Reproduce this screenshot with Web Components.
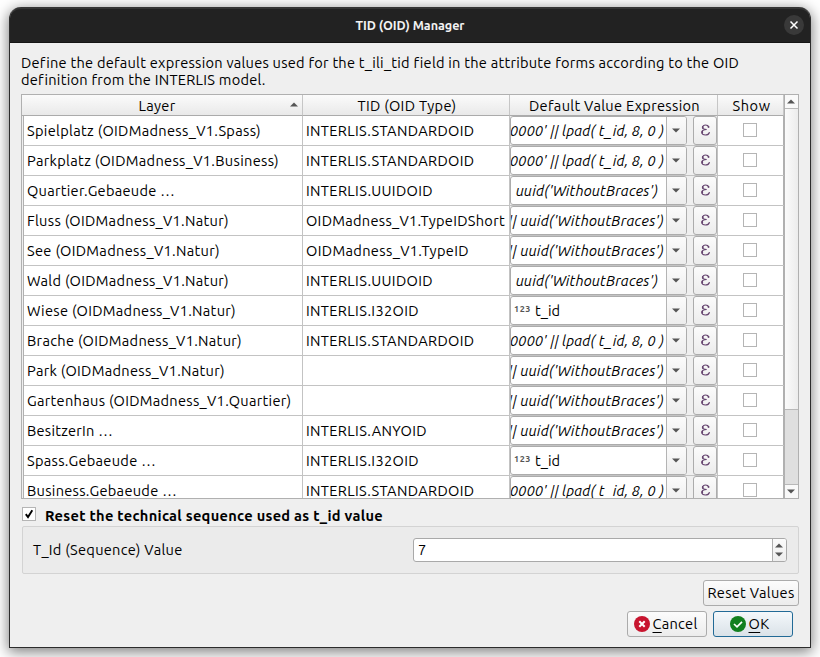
<!DOCTYPE html>
<html lang="en">
<head>
<meta charset="utf-8">
<title>TID (OID) Manager</title>
<style>
html,body{margin:0;height:100%;overflow:hidden;background:#fff}
body{font-family:"Ubuntu","Noto Sans",sans-serif;font-size:14.6px;color:#000}
</style>
</head>
<body>
<tid-dialog></tid-dialog>
<script>
class FitText extends HTMLElement{
  connectedCallback(){
    const root=this.attachShadow({mode:'open'});
    root.innerHTML='<style>:host{display:inline-block;white-space:pre;flex:none}</style><span><slot></slot></span>';
    const span=root.querySelector('span');
    const target=Number(this.getAttribute('w'));
    const width=span.getBoundingClientRect().width;
    if(target&&width) this.style.letterSpacing=((target-width)/this.textContent.length)+'px';
  }
}
const define=(name,html,setup)=>customElements.define(name,class extends HTMLElement{
  connectedCallback(){
    if(this.shadowRoot) return;
    this.attachShadow({mode:'open'});
    const t=document.createElement('template');
    t.innerHTML=typeof html==='function'?html(this):html;
    this.shadowRoot.append(t.content.cloneNode(true));
    if(setup) setup(this,this.shadowRoot);
  }
});
customElements.define('fit-text',FitText);

define('arrow-icon',el=>`<style>:host{display:flex;align-items:center;justify-content:center}svg{display:block}</style>
<svg width="8" height="5" viewBox="0 0 8 5"><path fill="#555" d="${el.hasAttribute('up')?'M0 4.5L4 .5L8 4.5Z':'M0 .5L4 4.5L8 .5Z'}"/></svg>`);

define('check-box',el=>`<style>:host{display:block;box-sizing:border-box;width:14px;height:14px;border:1px solid #b5b5b5;background:#fff}svg{display:block}</style>
${el.hasAttribute('checked')?'<svg width="12" height="12" viewBox="0 0 12 12"><path d="M2.8 6.1L5 9L9.3 2.2" fill="none" stroke="#000" stroke-width="1.9"/></svg>':''}`);

define('expression-field',`<style>
:host{display:flex;height:29px;background:#efefef}
.combo{box-sizing:border-box;width:177px;height:29px;display:flex;border:1px solid #acacac;border-radius:3px;background:#fff;overflow:hidden}
.value{flex:1;display:flex;align-items:center;overflow:hidden;line-height:27px}
.drop{box-sizing:border-box;width:20px;padding-right:2px;border-left:1px solid #b4b4b4;background:linear-gradient(#fbfbfb,#ededed)}
.eps{box-sizing:border-box;width:24px;height:29px;margin-left:6px;border:1px solid #acacac;border-radius:3px;background:linear-gradient(#fbfbfb,#ececec);display:flex;align-items:center;justify-content:center}
.expr{font-style:italic;margin-left:auto}
.num{font-size:9px;font-weight:700;color:#555;margin:-4px 4px 0 3px;line-height:12px}
svg{display:block;margin-top:-2px}
</style>
<div class="combo"><div class="value"></div><arrow-icon class="drop"></arrow-icon></div>
<div class="eps"><svg width="11" height="12" viewBox="0 0 12 14"><g fill="none" stroke="#65436f" stroke-linecap="round"><path stroke-width="1.3" d="M9.7 3.6C9.2 1.7 7.6 1.2 6 1.2C4.2 1.2 2.5 2.1 2.5 3.9C2.5 5.8 4.2 6.4 7.4 6.4C3.6 6.4 1.8 7.6 1.8 9.6C1.8 11.8 3.8 12.8 6 12.8C8.3 12.8 10 11.7 10.5 9.9"/><path stroke-width="2" d="M2.8 3.2V4.4M2.2 8.9V10.3M9.5 3V3.4"/></g></svg></div>`,
(el,root)=>{
  const v=root.querySelector('.value');
  const kinds={
    pad:'<fit-text class="expr" w="154" style="margin-right:2px">0000\' || lpad( t_id, 8, 0 )</fit-text>',
    uuid:'<fit-text class="expr" w="142" style="margin-right:8px">uuid(\'WithoutBraces\')</fit-text>',
    cat:'<fit-text class="expr" w="156" style="margin-right:2px">|| uuid(\'WithoutBraces\')</fit-text>',
    id:'<fit-text class="num" w="17">123</fit-text><fit-text w="25">t_id</fit-text>'};
  v.innerHTML=kinds[el.getAttribute('kind')];
  v.style.justifyContent=el.getAttribute('kind')==='id'?'flex-start':'flex-end';
  const text=v.querySelector('.expr');
  if(text) text.style.marginLeft='0';
});

define('table-row',`<style>
:host{display:grid;grid-template-columns:279px 207px 208px 66px;height:30px;flex:none;line-height:29px;box-sizing:border-box;border-bottom:1px solid #c3c3c3}
div{box-sizing:border-box;border-right:1px solid #c3c3c3;background:#fff;height:29px;padding-left:3px;overflow:hidden}
.e{padding:0}
.s{display:flex;justify-content:center;padding:7px 2px 0 0;border-right-color:#b0b0b0}
</style>
<div><slot name="layer"></slot></div><div><slot name="type"></slot></div><div class="e"><slot name="expr"></slot></div><div class="s"><check-box></check-box></div>`);

define('head-cell',`<style>
:host{position:relative;display:flex;justify-content:center;box-sizing:border-box;height:21px;padding-left:2px;line-height:21px;border-right:1px solid #c6c6c6;border-bottom:1px solid #ababab;background:linear-gradient(#fbfbfb,#e9e9e9)}
</style><slot></slot>`);

define('scroll-bar',`<style>
:host{display:flex;flex-direction:column;width:13px;border-left:1px solid #b0b0b0;background:#dfdfdf}
.b{height:13px;flex:none;background:#f9f9f9;padding-right:1px}
.top{border-bottom:1px solid #b8b8b8}
.handle{height:300px;background:linear-gradient(90deg,#fbfbfb,#ececec);border-bottom:1px solid #b8b8b8}
.bottom{margin-top:auto;border-top:1px solid #b8b8b8}
</style><arrow-icon up class="b top"></arrow-icon><div class="handle"></div><arrow-icon class="b bottom"></arrow-icon>`);

define('oid-table',`<style>
:host{display:flex;box-sizing:border-box;width:778px;height:405px;border:1px solid #b0b0b0;background:#efefef;overflow:hidden}
.main{width:762px;display:flex;flex-direction:column;overflow:hidden}
.head{display:grid;grid-template-columns:281px 207px 208px 66px;flex:none}
.sort{position:absolute;right:4px;top:7px}
.rows{display:flex;flex-direction:column;overflow:hidden;border-left:1px solid #b0b0b0;margin-left:1px;flex:1}
</style>
<div class="main"><div class="head">
<head-cell><fit-text w="37" style="margin-left:-12px">Layer</fit-text><arrow-icon up class="sort"></arrow-icon></head-cell>
<head-cell><fit-text w="99">TID (OID Type)</fit-text></head-cell>
<head-cell><fit-text w="171">Default Value Expression</fit-text></head-cell>
<head-cell><fit-text w="38">Show</fit-text></head-cell></div>
<div class="rows"></div></div><scroll-bar></scroll-bar>`,(el,root)=>{
  const S=['INTERLIS.STANDARDOID',168.5],U=['INTERLIS.UUIDOID',127],I=['INTERLIS.I32OID',113];
  const rows=[
    ['Spielplatz (OIDMadness_V1.Spass)',234,S,'pad'],
    ['Parkplatz (OIDMadness_V1.Business)',252,S,'pad'],
    ['Quartier.Gebaeude …',148,U,'uuid'],
    ['Fluss (OIDMadness_V1.Natur)',202,['OIDMadness_V1.TypeIDShort',199],'cat'],
    ['See (OIDMadness_V1.Natur)',193,['OIDMadness_V1.TypeID',163],'cat'],
    ['Wald (OIDMadness_V1.Natur)',202,U,'uuid'],
    ['Wiese (OIDMadness_V1.Natur)',209,I,'id'],
    ['Brache (OIDMadness_V1.Natur)',215,S,'pad'],
    ['Park (OIDMadness_V1.Natur)',198,null,'cat'],
    ['Gartenhaus (OIDMadness_V1.Quartier)',264.5,null,'cat'],
    ['BesitzerIn …',86,['INTERLIS.ANYOID',121],'cat'],
    ['Spass.Gebaeude …',129,I,'id'],
    ['Business.Gebaeude …',150,S,'pad']];
  root.querySelector('.rows').innerHTML=rows.map(([n,w,t,k])=>`<table-row><fit-text slot="layer" w="${w}">${n}</fit-text>${t?`<fit-text slot="type" w="${t[1]}">${t[0]}</fit-text>`:''}<expression-field slot="expr" kind="${k}"></expression-field></table-row>`).join('');
});

define('push-button',`<style>
:host{display:flex;align-items:center;justify-content:center;box-sizing:border-box;height:26px;border:1px solid #ababab;border-radius:3px;background:linear-gradient(#fcfcfc,#ececec);line-height:22px}
:host([primary]){border-color:#226a96;background:linear-gradient(#f4f8fb,#dae2e8)}
</style><slot></slot>`);

define('spin-box',`<style>
:host{display:flex;box-sizing:border-box;width:374px;height:24px;border:1px solid #a9a9a9;border-radius:3px;background:#fff;overflow:hidden}
.v{flex:1;padding-left:4px;line-height:22px}
.s{box-sizing:border-box;width:14px;padding-right:1px;border-left:1px solid #b0b0b0;background:linear-gradient(#fbfbfb,#eee);display:flex;flex-direction:column;justify-content:center;gap:4px}
</style><div class="v"><slot></slot></div><div class="s"><arrow-icon up></arrow-icon><arrow-icon></arrow-icon></div>`);

define('title-bar',`<style>
:host{display:grid;grid-template-columns:1fr auto 1fr;align-items:center;box-sizing:border-box;height:36px;background:#222;border-top:2px solid #353535;border-radius:11px 11px 0 0;border-bottom:1px solid #151515;color:#f2f2f2;font-size:12.6px;font-weight:700;line-height:33px}
.x{justify-self:end;margin-right:6px;margin-top:-1px;width:20px;height:20px;border-radius:50%;background:#393939}
svg{display:block}
</style><span></span><slot></slot><div class="x"><svg width="20" height="20" viewBox="0 0 20 20"><path d="M6.5 6.5L13.5 13.5M13.5 6.5L6.5 13.5" stroke="#fff" stroke-width="1.5"/></svg></div>`);

define('tid-dialog',`<style>
:host{display:block;padding:7px 9px 9px 9px;box-sizing:border-box;height:657px;width:820px}
.win{width:802px;height:641px;box-sizing:border-box;background:#efefef;border-radius:12px 12px 0 0;box-shadow:0 3px 14px 1px rgba(0,0,0,.5);display:flex;flex-direction:column;border:1px solid #2c2c2c;border-top:0}
.body{padding:11px 11px 0 11px;display:flex;flex-direction:column}
.intro{height:40px;line-height:17px}
.intro fit-text{display:block}
.check{display:flex;align-items:flex-start;height:27px;padding-left:1px}
.check check-box{margin-top:8px}
.check fit-text{margin-left:9px;font-weight:700;line-height:34px}
.group{box-sizing:border-box;height:48px;width:777px;margin-left:1px;border:1px solid #d3d3d3;border-radius:2px;background:#ebebeb;display:flex;justify-content:space-between;padding:11px 11px 0 10px;line-height:24px}
.actions{display:flex;justify-content:flex-end}
u{text-underline-offset:3px;text-decoration-thickness:1px}
svg{display:block;margin:-1px 3px 0 -3px}
</style>
<div class="win"><title-bar><fit-text w="109">TID (OID) Manager</fit-text></title-bar>
<div class="body">
<div class="intro"><fit-text w="717">Define the default expression values used for the t_ili_tid field in the attribute forms according to the OID</fit-text><fit-text w="244">definition from the INTERLIS model.</fit-text></div>
<oid-table></oid-table>
<div class="check"><check-box checked></check-box><fit-text w="338">Reset the technical sequence used as t_id value</fit-text></div>
<div class="group"><fit-text w="149.5">T_Id (Sequence) Value</fit-text><spin-box>7</spin-box></div>
<div class="actions" style="margin-top:6px"><push-button style="width:96px"><fit-text w="87">Reset Values</fit-text></push-button></div>
<div class="actions" style="margin-top:5px;gap:6px;padding-right:6px">
<push-button style="width:80px"><svg width="16" height="16" viewBox="0 0 16 16"><circle cx="8" cy="8" r="8" fill="#c8152f"/><path d="M5.3 5.3L10.7 10.7M10.7 5.3L5.3 10.7" stroke="#fff" stroke-width="2"/></svg><fit-text w="45"><u>C</u>ancel</fit-text></push-button>
<push-button primary style="width:80px"><svg style="margin-left:-7px" width="16" height="16" viewBox="0 0 16 16"><circle cx="8" cy="8" r="8" fill="#12801f"/><path d="M4 8L7 10.8L12 5.8" fill="none" stroke="#fff" stroke-width="1.7"/></svg><fit-text w="21"><u>O</u>K</fit-text></push-button>
</div></div></div>`);
</script>
</body>
</html>
